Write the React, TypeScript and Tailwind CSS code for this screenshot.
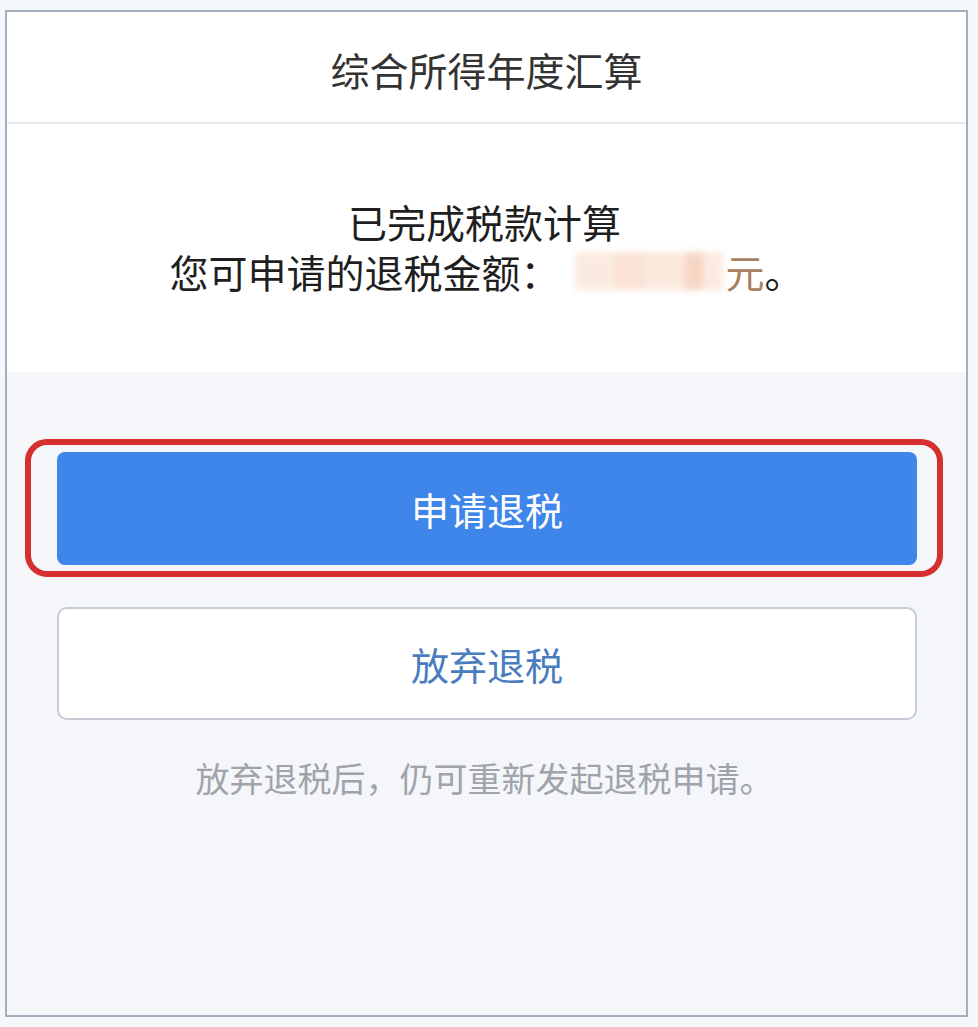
import React from "react";

export default function App() {
  return (
    <div
      className="w-full h-[1027px] bg-[#f4f8fa] pt-[10px] pl-[5px]"
      style={{ fontFamily: '"Noto Sans CJK SC", "Noto Sans", sans-serif' }}
    >
      <div className="w-[963px] h-[1007px] border-2 border-[#a3afbf] bg-[#f4f6f9] flex flex-col">
        {/* header */}
        <div className="h-[112px] bg-white border-b-2 border-[#e9ecef] flex items-center justify-center">
          <span className="text-[39px] text-[#333] leading-none mt-[4px]">综合所得年度汇算</span>
        </div>

        {/* result */}
        <div className="h-[248px] bg-white flex flex-col items-center pt-[72px]">
          <p className="text-[39px] text-[#1f1f1f] leading-[50px] mr-[4px]">已完成税款计算</p>
          <div className="flex items-center text-[39px] text-[#1f1f1f] leading-[50px]">
            <span>您可申请的退税金额：</span>
            <div className="ml-[16px] w-[148px] h-[38px] flex blur-[3px] opacity-80">
              <div className="w-[40px] bg-[#fbe6d8]" />
              <div className="w-[30px] bg-[#f9dccb]" />
              <div className="w-[40px] bg-[#fbe4d6]" />
              <div className="w-[18px] bg-[#f5cdb5]" />
              <div className="w-[20px] bg-[#fbe6d8]" />
            </div>
            <span className="text-[#a8805f] ml-[2px]">元</span>
            <span>。</span>
          </div>
        </div>

        {/* actions */}
        <div className="flex flex-col items-start pt-[67px]">
          <div className="ml-[18px] w-[918px] h-[138px] border-[6px] border-[#d52f2f] rounded-[22px] pt-[7px] pl-[26px] pr-[20px] pb-[6px]">
            <button className="w-full h-full bg-[#3f86ea] rounded-[8px] text-white text-[38px] leading-none">
              申请退税
            </button>
          </div>
          <button className="mt-[30px] ml-[50px] w-[860px] h-[113px] bg-white border-2 border-[#c6ccd4] rounded-[10px] text-[#4a7dc0] text-[38px] leading-none">
            放弃退税
          </button>
          <p className="mt-[38px] w-full text-center text-[34px] text-[#a0a4aa] leading-[40px] pr-[4px]">
            放弃退税后，仍可重新发起退税申请。
          </p>
        </div>
      </div>
    </div>
  );
}
